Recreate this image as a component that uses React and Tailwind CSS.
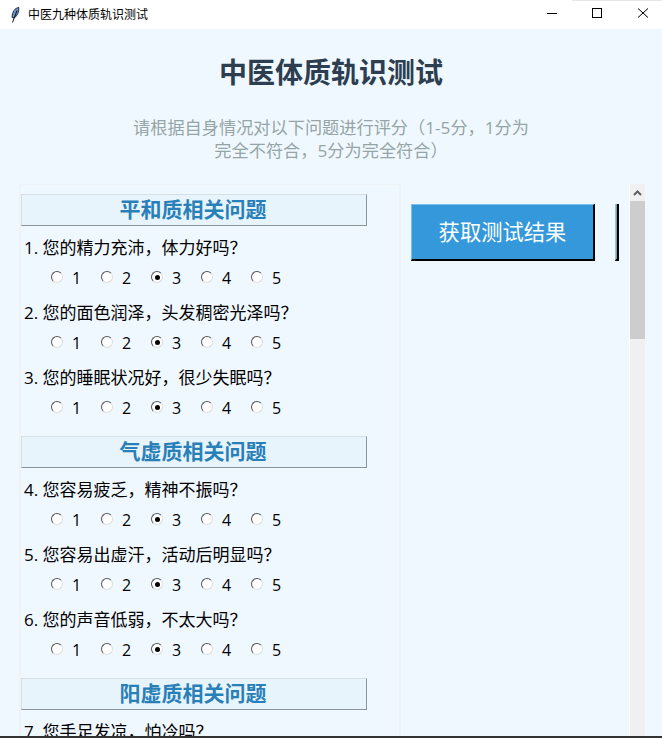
const FONT = "font-['Open_Sans','Noto_Sans_CJK_SC',sans-serif]";

const sections = [
  { title: "平和质相关问题", qs: ["1. 您的精力充沛，体力好吗？", "2. 您的面色润泽，头发稠密光泽吗？", "3. 您的睡眠状况好，很少失眠吗？"] },
  { title: "气虚质相关问题", qs: ["4. 您容易疲乏，精神不振吗？", "5. 您容易出虚汗，活动后明显吗？", "6. 您的声音低弱，不太大吗？"] },
  { title: "阳虚质相关问题", qs: ["7. 您手足发凉，怕冷吗？"], partial: true },
];

function Radio({ n }) {
  const on = n === 3;
  return (
    <div className="flex w-[50px] shrink-0 items-center">
      <span className="-mt-[2px] flex h-[12px] w-[12px] items-center justify-center rounded-full border border-t-[#555] border-l-[#555] border-r-[#ddd] border-b-[#ddd] bg-white">
        {on && <span className="h-[5px] w-[5px] rounded-full bg-black" />}
      </span>
      <span className="ml-[9px] text-[16px] leading-[20px] text-black">{n}</span>
    </div>
  );
}

function Question({ text, partial }) {
  return (
    <div className="h-[65px]">
      <div className="pl-[3px] text-[17px] leading-[24px] text-black whitespace-nowrap">{text}</div>
      {!partial && (
        <div className="mt-[8px] flex pl-[30px]">
          {[1, 2, 3, 4, 5].map((n) => <Radio key={n} n={n} />)}
        </div>
      )}
    </div>
  );
}

function Section({ title, qs, partial }) {
  return (
    <div className="h-[242px]">
      <div className="flex h-[32px] w-[346px] items-center justify-center border border-t-[#d5dfe6] border-l-[#d5dfe6] border-r-[#8a949c] border-b-[#8a949c] bg-[#e8f4fc] pr-[2px] text-[21px] font-bold text-[#2980b9]">
        {title}
      </div>
      <div className="mt-[10px]">
        {qs.map((q) => <Question key={q} text={q} partial={partial} />)}
      </div>
    </div>
  );
}

function Feather() {
  return (
    <svg width="9" height="16" viewBox="0 0 9 16" className="ml-[11px]">
      <path d="M7.800 0.500C4 1 1.300 4.500 1 10.500L3.300 11C6.300 8.500 8.200 5 7.800 0.500Z" fill="#6d94c9" stroke="#1f2d45" strokeWidth="1" />
      <path d="M6 3.500L1.500 15.500" fill="none" stroke="#111" strokeWidth="1" />
    </svg>
  );
}

export default function App() {
  return (
    <div className={`flex h-[738px] w-[662px] flex-col overflow-hidden bg-[#f0f8ff] ${FONT}`}>
      <div className="relative flex h-[29px] shrink-0 items-center bg-white">
        <Feather />
        <span className="ml-[8px] text-[12px] leading-none text-black">中医九种体质轨识测试</span>
        <div className="ml-auto flex items-center">
          <svg width="138" height="29" viewBox="0 0 138 29">
            <path d="M23 13.500H33" stroke="#000" strokeWidth="1" />
            <rect x="68.500" y="8.500" width="9" height="9" fill="none" stroke="#000" strokeWidth="1" />
            <path d="M114 8.500L124 17.500M124 8.500L114 17.500" stroke="#000" strokeWidth="1" />
          </svg>
        </div>
        <div className="absolute right-0 top-0 h-[1px] w-[90px] bg-[#e6e6e6]" />
      </div>

      <div className="flex min-h-0 flex-1 flex-col">
        <h1 className="mt-[24px] text-center text-[28px] font-bold leading-[38px] text-[#2c3e50]">中医体质轨识测试</h1>
        <p className="mx-auto mt-[25px] w-[420px] text-center text-[17.200px] leading-[23px] text-[#95a5a6]">
          请根据自身情况对以下问题进行评分（1-5分，1分为<br />完全不符合，5分为完全符合）
        </p>

        <div className="mt-[22px] flex min-h-0 flex-1 pl-[19px]">
          <div className="h-full w-[382px] shrink-0 overflow-hidden border-l-2 border-r-2 border-t border-[#f0f3f5] pt-[9px]">
            {sections.map((s) => <Section key={s.title} {...s} />)}
          </div>

          <div className="ml-[10px] mt-[20px] flex h-[57px] w-[208px] shrink-0">
            <button className="h-[57px] w-[184px] border-t border-l border-r-2 border-b-2 border-t-[#7cc0ee] border-l-[#7cc0ee] border-r-black border-b-black bg-[#3498db] text-[21.300px] text-white">
              获取测试结果
            </button>
            <div className="ml-[20px] h-[57px] w-[4px] border-l border-r-2 border-b-2 border-l-[#9fc3c9] border-r-black border-b-black bg-[#7f9ea3]" />
          </div>

          <div className="ml-[10px] flex h-full w-[16px] shrink-0 flex-col border-l border-white bg-[#f0f0f0]">
            <div className="flex h-[17px] items-center justify-center bg-[#f0f0f0]">
              <svg width="9" height="6" viewBox="0 0 9 6"><path d="M1 5L4.500 1.500L8 5" fill="none" stroke="#606060" strokeWidth="2" /></svg>
            </div>
            <div className="h-[138px] bg-[#cdcdcd]" />
          </div>
        </div>
      </div>
      <div className="h-[2px] shrink-0 bg-[#333]" />
    </div>
  );
}
